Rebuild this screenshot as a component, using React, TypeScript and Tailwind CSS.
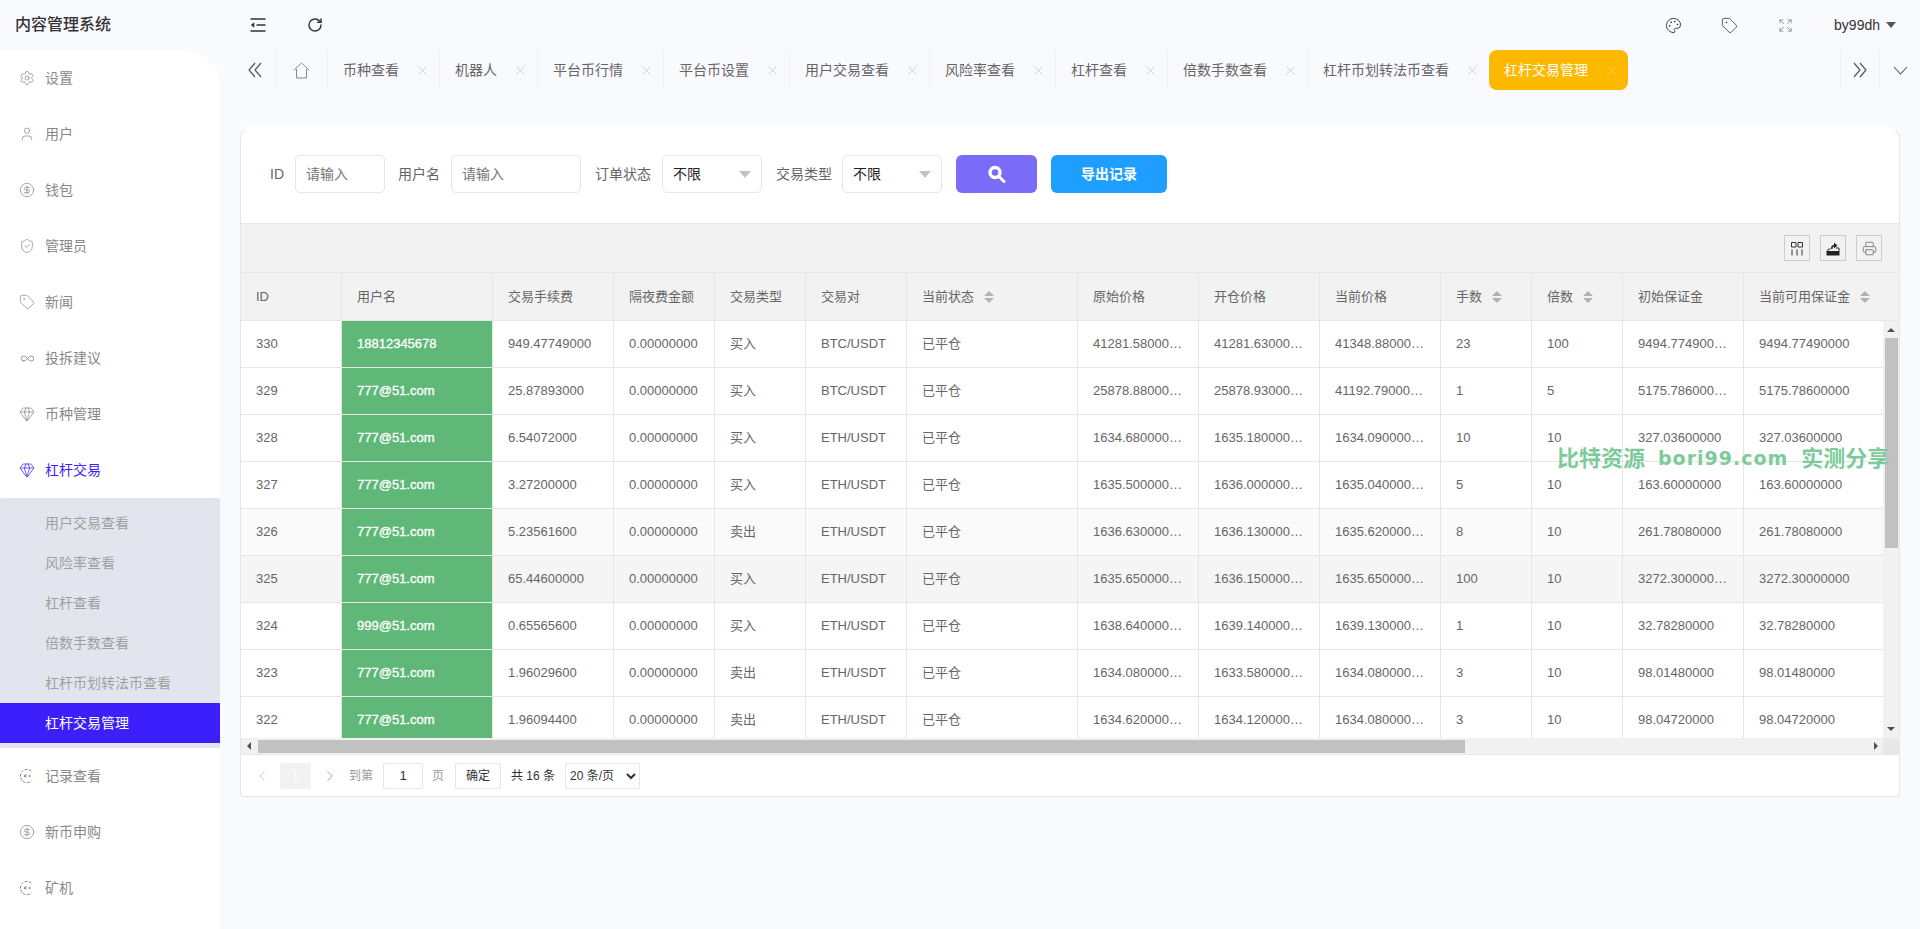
import React from "react";
import { Settings, User, CircleDollarSign, ShieldCheck, Tag, Infinity as InfinityIcon, Gem, RotateCw, Palette, Expand, Printer, ChevronLeft, ChevronRight } from "lucide-react";

const FONT = "[font-family:'Liberation_Sans','Noto_Sans_CJK_SC',sans-serif]";

function RecordIcon({ className }: { className?: string }) {
  return (
    <svg width="16" height="16" viewBox="0 0 16 16" fill="none" stroke="currentColor" strokeWidth="1" className={className}>
      <path d="M12.5 3.2A6.6 6.6 0 1 0 12.5 12.8" strokeDasharray="3 1.2" />
      <path d="M5 8h3M6.6 6.4 5 8l1.6 1.6" />
      <circle cx="10.6" cy="8" r="0.6" fill="currentColor" />
    </svg>
  );
}

type NavItem = { label: string; icon: React.ReactNode; active?: boolean };
const ic = { size: 16, strokeWidth: 1.1 };
const navTop: NavItem[] = [
  { label: "设置", icon: <Settings {...ic} /> },
  { label: "用户", icon: <User {...ic} /> },
  { label: "钱包", icon: <CircleDollarSign {...ic} /> },
  { label: "管理员", icon: <ShieldCheck {...ic} /> },
  { label: "新闻", icon: <Tag {...ic} /> },
  { label: "投拆建议", icon: <InfinityIcon size={15} strokeWidth={1.4} /> },
  { label: "币种管理", icon: <Gem {...ic} /> },
  { label: "杠杆交易", icon: <Gem {...ic} />, active: true },
];
const navBottom: NavItem[] = [
  { label: "记录查看", icon: <RecordIcon /> },
  { label: "新币申购", icon: <CircleDollarSign {...ic} /> },
  { label: "矿机", icon: <RecordIcon /> },
];
const subNav = ["用户交易查看", "风险率查看", "杠杆查看", "倍数手数查看", "杠杆币划转法币查看"];

function NavRow({ item }: { item: NavItem }) {
  return (
    <div className={`flex h-[56px] items-center gap-[10px] pl-[19px] text-[14px] ${item.active ? "text-[#3c1ffb]" : "text-[#888]"}`}>
      <span className="flex w-[16px] justify-center">{item.icon}</span>
      <span>{item.label}</span>
    </div>
  );
}

function Sidebar() {
  return (
    <aside className="flex w-[220px] shrink-0 flex-col">
      <div className="flex h-[50px] items-center pl-[15px] text-[16px] font-medium text-[#333]">内容管理系统</div>
      <nav className="flex-1 rounded-tr-[36px] bg-white">
        {navTop.map((n) => <NavRow key={n.label} item={n} />)}
        <div className="rounded-[2px] bg-[#e2e5ed] py-[5px]">
          {subNav.map((s) => (
            <div key={s} className="flex h-[40px] items-center pl-[45px] text-[14px] text-[#a0a0a0]">{s}</div>
          ))}
          <div className="flex h-[40px] items-center bg-[#3c1ffb] pl-[45px] text-[14px] text-white">杠杆交易管理</div>
        </div>
        {navBottom.map((n) => <NavRow key={n.label} item={n} />)}
      </nav>
    </aside>
  );
}

function TopBar() {
  return (
    <div className="flex h-[50px] items-center pl-[30px] pr-[24px] text-[#333]">
      <svg width="16" height="14" viewBox="0 0 16 14" fill="none" stroke="#333" strokeWidth="1.4">
        <path d="M0.5 1h15M6.5 7h9M0.5 13h15" />
        <path d="M4 4.8 1.2 7 4 9.2Z" fill="#333" strokeWidth="0.6" />
      </svg>
      <RotateCw size={16} strokeWidth={2.2} className="ml-[41px]" />
      <div className="flex-1" />
      <Palette size={17} strokeWidth={1.3} />
      <Tag size={17} strokeWidth={1.1} className="ml-[39px]" />
      <Expand size={15} strokeWidth={1} className="ml-[40px] text-[#666]" />
      <span className="ml-[41px] text-[14px]">by99dh</span>
      <span className="ml-[6px] h-0 w-0 border-x-[5px] border-t-[6px] border-x-transparent border-t-[#555]" />
    </div>
  );
}

const tabs = ["币种查看", "机器人", "平台币行情", "平台币设置", "用户交易查看", "风险率查看", "杠杆查看", "倍数手数查看", "杠杆币划转法币查看"];

function CloseX({ color = "#c8c8c8" }: { color?: string }) {
  return (
    <svg width="9" height="9" viewBox="0 0 9 9" stroke={color} strokeWidth="0.9" className="shrink-0">
      <path d="M0.5 0.5l8 8M8.5 0.5l-8 8" />
    </svg>
  );
}

function DoubleChevron({ dir }: { dir: "l" | "r" }) {
  return (
    <svg width="14" height="16" viewBox="0 0 14 16" fill="none" stroke="#555" strokeWidth="1.2" className={dir === "r" ? "rotate-180" : ""}>
      <path d="M7 1 1 8l6 7M13 1 7 8l6 7" />
    </svg>
  );
}

function TabStrip() {
  return (
    <div className="flex h-[40px] text-[14px] text-[#666]">
      <div className="flex w-[56px] items-center justify-center border-r border-[#f0f1f5] pl-[18px] pr-[4px]">
        <DoubleChevron dir="l" />
      </div>
      <div className="flex w-[52px] items-center justify-center border-r border-[#f0f1f5] pr-[1px]">
        <svg width="17" height="17" viewBox="0 0 17 17" fill="none" stroke="#888" strokeWidth="1">
          <path d="M0.8 8.2 8.5 1l7.7 7.2M3.5 7v9h10V7" />
        </svg>
      </div>
      {tabs.map((t) => (
        <div key={t} className="flex items-center border-r border-[#f0f1f5] pl-[15px] pr-[12px]">
          <span>{t}</span>
          <span className="ml-[19px]"><CloseX /></span>
        </div>
      ))}
      <div className="-ml-[1px] flex w-[139px] items-center rounded-[8px] bg-[#ffb800] pl-[15px] text-white">
        <span>杠杆交易管理</span>
        <span className="ml-[19px]"><CloseX color="#ffd45e" /></span>
      </div>
      <div className="flex-1" />
      <div className="flex w-[40px] items-center justify-center border-x border-[#f0f1f5]">
        <DoubleChevron dir="r" />
      </div>
      <div className="flex w-[40px] items-center justify-center">
        <svg width="15" height="9" viewBox="0 0 15 9" fill="none" stroke="#555" strokeWidth="1.1"><path d="M1 1l6.5 7L14 1" /></svg>
      </div>
    </div>
  );
}

function FilterSelect() {
  return (
    <div className="flex h-[38px] w-[100px] items-center justify-between rounded-[5px] border border-[#e6e6e6] bg-white pl-[10px] pr-[10px] text-[14px] text-[#222]">
      <span>不限</span>
      <span className="h-0 w-0 border-x-[6px] border-t-[7px] border-x-transparent border-t-[#c2c2c2]" />
    </div>
  );
}

function Filters() {
  const inputCls = "h-[38px] rounded-[5px] border border-[#e6e6e6] bg-white pl-[10px] text-[14px] outline-none placeholder:text-[#757575]";
  const label = "text-[14px] text-[#666]";
  return (
    <div className="flex h-[97px] items-center pb-[1px] pl-[29px]">
      <span className={label}>ID</span>
      <input placeholder="请输入" className={`ml-[11px] w-[90px] ${inputCls}`} />
      <span className={`ml-[13px] ${label}`}>用户名</span>
      <input placeholder="请输入" className={`ml-[11px] w-[130px] ${inputCls}`} />
      <span className={`ml-[14px] ${label}`}>订单状态</span>
      <div className="ml-[11px]"><FilterSelect /></div>
      <span className={`ml-[14px] ${label}`}>交易类型</span>
      <div className="ml-[10px]"><FilterSelect /></div>
      <button className="ml-[14px] flex h-[38px] w-[81px] items-center justify-center rounded-[6px] bg-[#7b6cf8]">
        <svg width="18" height="18" viewBox="0 0 18 18" fill="none" stroke="#fff" strokeWidth="3.4">
          <circle cx="7" cy="7.5" r="5" />
          <path d="M11.5 12l4.5 4.5" strokeLinecap="round" strokeWidth="3" />
        </svg>
      </button>
      <button className="ml-[14px] h-[38px] w-[116px] rounded-[6px] bg-[#1e9fff] text-[14px] font-bold text-white">导出记录</button>
    </div>
  );
}

function ToolBtn({ children }: { children: React.ReactNode }) {
  return <div className="flex h-[26px] w-[26px] items-center justify-center border border-[#ccc]">{children}</div>;
}

function Toolbar() {
  return (
    <div className="flex h-[50px] items-center justify-end gap-[10px] border-y border-[#e6e6e6] bg-[#f2f2f2] pr-[17px]">
      <ToolBtn>
        <svg width="14" height="15" viewBox="0 0 14 15" fill="none" stroke="#333" strokeWidth="1">
          <path d="M1.5 1.5h4.5v4.5h-4.5zM8 1.5h4.5v4.5h-4.5zM2 8.5v6M7 8.5v6M12 8.5v6" />
        </svg>
      </ToolBtn>
      <ToolBtn>
        <svg width="14" height="15" viewBox="0 0 14 15">
          <path d="M0.5 10h13v4.5h-13z" fill="#222" />
          <path d="M1.5 10 2.5 8h2M10 7h3v3" fill="none" stroke="#222" strokeWidth="1" />
          <path d="M5 8C5 5 6 4 8 4V1.5L11.5 4.6 8 7.5V5.5C7 5.5 6.5 6.5 6.5 8Z" fill="#222" />
        </svg>
      </ToolBtn>
      <ToolBtn><Printer size={15} strokeWidth={1.4} className="text-[#777]" /></ToolBtn>
    </div>
  );
}

function SortCaret() {
  return (
    <span className="ml-[10px] inline-flex flex-col gap-[2px] align-middle">
      <span className="h-0 w-0 border-x-[5px] border-b-[5px] border-x-transparent border-b-[#b2b2b2]" />
      <span className="h-0 w-0 border-x-[5px] border-t-[5px] border-x-transparent border-t-[#b2b2b2]" />
    </span>
  );
}

const colWidths = ["w-[101px]", "w-[151px]", "w-[121px]", "w-[101px]", "w-[91px]", "w-[101px]", "w-[171px]", "w-[121px]", "w-[121px]", "w-[121px]", "w-[91px]", "w-[91px]", "w-[121px]"];
const heads: [string, boolean][] = [
  ["ID", false], ["用户名", false], ["交易手续费", false], ["隔夜费金额", false], ["交易类型", false], ["交易对", false],
  ["当前状态", true], ["原始价格", false], ["开仓价格", false], ["当前价格", false], ["手数", true], ["倍数", true], ["初始保证金", false], ["当前可用保证金", true],
];

const rows = [
  ["330", "18812345678", "949.47749000", "买入", "BTC/USDT", "41281.58000000", "41281.63000000", "41348.88000000", "23", "100", "9494.77490000"],
  ["329", "777@51.com", "25.87893000", "买入", "BTC/USDT", "25878.88000000", "25878.93000000", "41192.79000000", "1", "5", "5175.78600000"],
  ["328", "777@51.com", "6.54072000", "买入", "ETH/USDT", "1634.68000000", "1635.18000000", "1634.09000000", "10", "10", "327.03600000"],
  ["327", "777@51.com", "3.27200000", "买入", "ETH/USDT", "1635.50000000", "1636.00000000", "1635.04000000", "5", "10", "163.60000000"],
  ["326", "777@51.com", "5.23561600", "卖出", "ETH/USDT", "1636.63000000", "1636.13000000", "1635.62000000", "8", "10", "261.78080000"],
  ["325", "777@51.com", "65.44600000", "买入", "ETH/USDT", "1635.65000000", "1636.15000000", "1635.65000000", "100", "10", "3272.30000000"],
  ["324", "999@51.com", "0.65565600", "买入", "ETH/USDT", "1638.64000000", "1639.14000000", "1639.13000000", "1", "10", "32.78280000"],
  ["323", "777@51.com", "1.96029600", "卖出", "ETH/USDT", "1634.08000000", "1633.58000000", "1634.08000000", "3", "10", "98.01480000"],
  ["322", "777@51.com", "1.96094400", "卖出", "ETH/USDT", "1634.62000000", "1634.12000000", "1634.08000000", "3", "10", "98.04720000"],
];

function rowBg(i: number) {
  if (i === 4) return "bg-[#fafafa]";
  if (i === 5) return "bg-[#f5f5f5]";
  return "bg-white";
}

function Cols({ last }: { last: string }) {
  return (
    <colgroup>
      {colWidths.map((c, i) => <col key={i} className={c} />)}
      <col className={last} />
    </colgroup>
  );
}

const cellBase = "h-[47px] truncate border-b border-r border-[#e6e6e6] px-[15px] text-left text-[13px] font-normal text-[#666]";

function DataTable() {
  return (
    <div>
      <div className="h-[48px] overflow-hidden bg-[#f2f2f2]">
        <table className="w-[1658px] table-fixed border-separate border-spacing-0">
          <Cols last="w-[156px]" />
          <thead>
            <tr>
              {heads.map(([h, s], i) => (
                <th key={h} className={`h-[48px] truncate border-b border-[#e6e6e6] px-[15px] text-left text-[13px] font-normal text-[#666] ${i < 13 ? "border-r" : ""}`}>
                  {h}{s && <SortCaret />}
                </th>
              ))}
            </tr>
          </thead>
        </table>
      </div>
      <div className="flex h-[417px]">
        <div className="flex-1 overflow-hidden">
          <table className="w-[1642px] table-fixed border-separate border-spacing-0">
            <Cols last="w-[140px]" />
            <tbody>
              {rows.map((r, i) => (
                <tr key={r[0]} className={rowBg(i)}>
                  <td className={cellBase}>{r[0]}</td>
                  <td className="h-[47px] truncate border-b border-r border-[#e6e6e6] bg-[#5fb878] px-[15px] text-[13px] text-white [-webkit-text-stroke:0.3px_white]">{r[1]}</td>
                  <td className={cellBase}>{r[2]}</td>
                  <td className={cellBase}>0.00000000</td>
                  <td className={cellBase}>{r[3]}</td>
                  <td className={cellBase}>{r[4]}</td>
                  <td className={cellBase}>已平仓</td>
                  <td className={cellBase}>{r[5]}</td>
                  <td className={cellBase}>{r[6]}</td>
                  <td className={cellBase}>{r[7]}</td>
                  <td className={cellBase}>{r[8]}</td>
                  <td className={cellBase}>{r[9]}</td>
                  <td className={cellBase}>{r[10]}</td>
                  <td className={cellBase}>{r[10]}</td>
                </tr>
              ))}
            </tbody>
          </table>
        </div>
        <div className="flex w-[16px] shrink-0 flex-col items-center bg-[#f1f1f1]">
          <span className="mt-[7px] h-0 w-0 border-x-[4px] border-b-[4px] border-x-transparent border-b-[#505050]" />
          <span className="mt-[6px] h-[210px] w-[13px] bg-[#c1c1c1]" />
          <div className="flex-1" />
          <span className="mb-[7px] h-0 w-0 border-x-[4px] border-t-[4px] border-x-transparent border-t-[#505050]" />
        </div>
      </div>
      <div className="flex h-[17px] items-center border-b border-[#e6e6e6] bg-[#f1f1f1]">
        <span className="ml-[6px] h-0 w-0 border-y-[4px] border-r-[4px] border-y-transparent border-r-[#505050]" />
        <span className="ml-[7px] h-[13px] w-[1207px] bg-[#c1c1c1]" />
        <div className="flex-1" />
        <span className="mr-[5px] h-0 w-0 border-y-[4px] border-l-[4px] border-y-transparent border-l-[#505050]" />
        <span className="h-full w-[16px] bg-[#e8e8e8]" />
      </div>
    </div>
  );
}

function Pagination() {
  return (
    <div className="flex h-[41px] items-center pl-[12px] text-[12px] text-[#333]">
      <ChevronLeft size={18} strokeWidth={1.2} className="text-[#c2c2c2]" />
      <span className="ml-[9px] flex h-[26px] w-[31px] items-center justify-center rounded-[2px] bg-[#f2f2f2] text-white">1</span>
      <ChevronRight size={18} strokeWidth={1.2} className="ml-[10px] text-[#999]" />
      <span className="ml-[10px] text-[#999]">到第</span>
      <input defaultValue="1" className="ml-[10px] h-[26px] w-[40px] rounded-[2px] border border-[#e6e6e6] bg-white text-center text-[13px] outline-none" />
      <span className="ml-[9px] text-[#999]">页</span>
      <span className="ml-[11px] flex h-[26px] w-[46px] items-center justify-center rounded-[2px] border border-[#e6e6e6] bg-white text-[12px] text-[#333]">确定</span>
      <span className="ml-[10px]">共 16 条</span>
      <select defaultValue="20" className="ml-[10px] h-[26px] w-[75px] rounded-[2px] border border-[#e6e6e6] bg-white text-[12px] text-[#333] outline-none">
        <option value="20">20 条/页</option>
      </select>
    </div>
  );
}

export default function App() {
  return (
    <div className={`relative flex h-[929px] w-full overflow-hidden bg-[#f9fafe] ${FONT}`}>
      <Sidebar />
      <main className="flex min-w-0 flex-1 flex-col">
        <TopBar />
        <TabStrip />
        <div className="pl-[20px] pr-[20px] pt-[35px]">
          <section className="rounded-t-[15px] rounded-b-[3px] border-x border-b border-t border-[#e6e6e6] border-t-transparent bg-white">
            <Filters />
            <Toolbar />
            <DataTable />
            <Pagination />
          </section>
        </div>
      </main>
      <div className="pointer-events-none absolute left-[1557px] top-[442px] flex items-center gap-[13px] whitespace-nowrap font-bold text-[#7dcb9b] [font-family:'DejaVu_Sans','Noto_Sans_CJK_SC',sans-serif]">
        <span className="text-[22px]">比特资源</span>
        <span className="text-[19px] tracking-[1px]">bori99.com</span>
        <span className="text-[22px]">实测分享</span>
      </div>
    </div>
  );
}
